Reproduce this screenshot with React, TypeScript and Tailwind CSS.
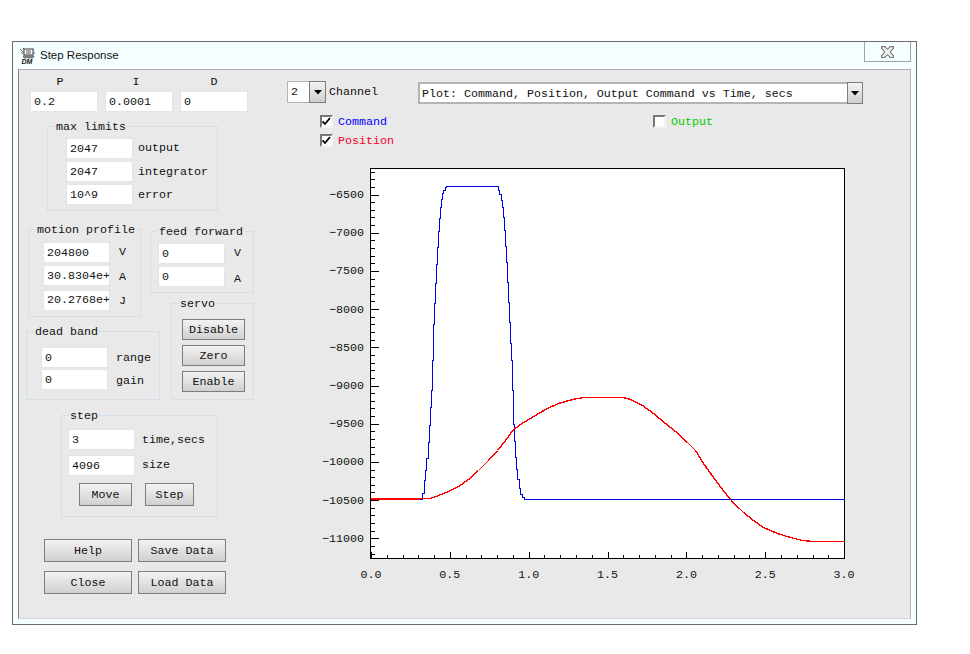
import type { ReactNode } from "react";

const BLUE_PTS: [number, number][] = [
  [371, 499], [420, 499], [422, 493], [424, 480], [425, 470], [426, 458], [428, 442], [429, 425], [430, 407],
  [431, 390], [432, 360], [433, 324], [434, 303], [435, 283], [436, 264], [437, 247], [438, 231], [439, 218],
  [440, 207], [441, 199], [442, 193], [443, 190], [445, 187], [446, 186], [496, 186], [498, 190], [499, 194],
  [501, 200], [502, 207], [503, 217], [504, 230], [505, 246], [506, 262], [507, 282], [508, 302], [509, 322],
  [510, 343], [511, 360], [512, 390], [513, 424], [514, 441], [515, 457], [516, 469], [517, 479], [519, 488],
  [520, 494], [522, 497], [524, 499], [844, 499],
];

const RED_PTS: [number, number][] = [
  [371, 498], [430, 498], [438, 495], [448, 491], [458, 486], [468, 479], [478, 470], [488, 460], [497, 450],
  [505, 440], [513, 429], [523, 422], [535, 415], [545, 409], [558, 403], [572, 399], [583, 397], [623, 397],
  [630, 399], [642, 405], [653, 413], [665, 423], [675, 431], [687, 442], [695, 450], [703, 463], [713, 477],
  [722, 489], [730, 499], [743, 512], [753, 520], [763, 527], [777, 533], [790, 537], [802, 540], [813, 541],
  [844, 541],
];

const Y_LABELS = [-6500, -7000, -7500, -8000, -8500, -9000, -9500, -10000, -10500, -11000];
const yPos = (v: number) => 194.5 + ((-6500 - v) / 500) * 38.2;
const xPos = (t: number) => 371 + t * 157.7;

function stepPath(pts: [number, number][]) {
  return pts.map(([x, y], i) => (i == 0 ? `M${x + 0.5} ${y + 0.5}` : `H${x + 0.5}V${y + 0.5}`)).join("");
}

function Field({ value, wide }: { value: string; wide?: boolean }) {
  return (
    <input
      readOnly
      value={value}
      className={`${wide ? "w-[68px]" : "w-[67px]"} h-[21px] shrink-0 bg-white border border-[#e1e5ea] pl-[3px] text-[11.67px] outline-none text-[#111]`}
    />
  );
}

function Group({ title, className, children }: { title: string; className: string; children: ReactNode }) {
  return (
    <div className={`relative border border-[#d5dfe9] ${className}`}>
      <span className="absolute -top-[6px] left-[7px] bg-[#e9e9e9] px-px leading-[13px] text-[11.67px] text-[#111]">{title}</span>
      {children}
    </div>
  );
}

function Btn({ label, className }: { label: string; className: string }) {
  return (
    <button className={`bg-linear-to-b from-[#f3f3f3] to-[#d0d0d0] border border-[#7d7d7d] pt-[2px] text-[11.67px] text-[#111] text-center ${className}`}>
      {label}
    </button>
  );
}

function Arrow({ className }: { className: string }) {
  return (
    <div className={`flex items-center justify-center bg-linear-to-b from-[#f3f3f3] to-[#cfcfcf] border border-[#7d7d7d] ${className}`}>
      <svg width="8" height="5" viewBox="0 0 8 5">
        <path d="M0 0H8L4 4.5Z" fill="#000" />
      </svg>
    </div>
  );
}

function Check({ label, color, checked }: { label: string; color: string; checked?: boolean }) {
  return (
    <div className="flex items-center h-[13px]">
      <div className="w-[13px] h-[13px] bg-white border-2 border-t-[#777] border-l-[#777] border-r-[#f4f4f4] border-b-[#f4f4f4]">
        {checked && (
          <svg width="9" height="9" viewBox="0 0 9 9">
            <path d="M0.5 4.5L3 7L8 1" fill="none" stroke="#000" strokeWidth="1.8" />
          </svg>
        )}
      </div>
      <span className={`ml-[5px] pt-[2px] text-[11.67px] ${color}`}>{label}</span>
    </div>
  );
}

function LogoIcon() {
  return (
    <svg width="18" height="18" viewBox="0 0 18 18">
      <path d="M1 2L4 5M2 6H5M4 1L6 4M15 2L13 4M16 6H14" stroke="#444" strokeWidth="0.8" fill="none" />
      <rect x="5" y="2" width="9" height="6" fill="#fff" stroke="#333" strokeWidth="1" />
      <path d="M7 4H12M7 6H12" stroke="#555" strokeWidth="1" />
      <path d="M4 9H15L14 11H5Z" fill="#999" stroke="#444" strokeWidth="0.6" />
      <text x="2.5" y="17" fontSize="7" fontWeight="bold" fontStyle="italic" fontFamily="'Liberation Sans', sans-serif" fill="#111">
        DM
      </text>
    </svg>
  );
}

function Plot() {
  const yMinor: number[] = [];
  for (let v = -6200; v >= -11200; v -= 100) yMinor.push(v);
  const xTicks: number[] = [];
  for (let i = 0; i <= 30; i++) xTicks.push(i / 10);

  return (
    <svg width="546" height="430" viewBox="315 160 546 430" className="block ml-[28px] mt-[13px]">
      <rect x="370.5" y="168.5" width="474" height="390" fill="#fff" stroke="#000" shapeRendering="crispEdges" />
      <g stroke="#000" shapeRendering="crispEdges">
        {yMinor.map((v) => {
          const major = v % 500 == 0;
          const y = Math.round(yPos(v)) + 0.5;
          return <line key={v} x1="371" x2={major ? 379 : 375} y1={y} y2={y} />;
        })}
        {xTicks.map((t, i) => {
          const x = Math.round(xPos(t)) + 0.5;
          return <line key={i} x1={x} x2={x} y1="558" y2={i % 5 == 0 ? 552 : 555} />;
        })}
        <line x1="371.5" x2="371.5" y1="553" y2="558" />
      </g>
      <path d={stepPath(BLUE_PTS)} fill="none" stroke="#0000e6" shapeRendering="crispEdges" />
      <polyline
        points={RED_PTS.map(([x, y]) => `${x + 0.5},${y + 0.5}`).join(" ")}
        fill="none"
        stroke="#ff0000"
        strokeWidth="1.4"
        shapeRendering="crispEdges"
      />
      <line x1="371" x2="420" y1="498.5" y2="498.5" stroke="#ff0000" strokeWidth="2" shapeRendering="crispEdges" />
      <g fontSize="11.67" fill="#111" fontFamily="'Liberation Mono', monospace">
        {Y_LABELS.map((v) => (
          <text key={v} x="364" y={yPos(v) + 3.5} textAnchor="end">
            {`\u2212${Math.abs(v)}`}
          </text>
        ))}
        {[0, 0.5, 1, 1.5, 2, 2.5, 3].map((t) => (
          <text key={t} x={xPos(t)} y="578" textAnchor="middle">
            {t.toFixed(1)}
          </text>
        ))}
      </g>
    </svg>
  );
}

function App() {
  return (
    <div className="w-[970px] h-[654px] bg-white pt-[41px] pl-[12px] overflow-hidden font-['Liberation_Mono',monospace]">
      <div className="w-[905px] h-[584px] border border-[#6b6b6b] bg-[#f5ffff]">
        <div className="h-[27px] flex justify-between pl-[6px] pr-[5px]">
          <div className="flex items-center gap-[3px]">
            <LogoIcon />
            <span className="text-[11.5px] text-[#111] font-['Liberation_Sans',sans-serif]">Step Response</span>
          </div>
          <div className="w-[47px] h-[20px] border border-t-0 border-[#a3a3a3] flex items-center justify-center">
            <svg width="13" height="12" viewBox="0 0 12 11">
              <path
                d="M0.5 0.5H3.5L6 3L8.5 0.5H11.5V2L8.5 5.5L11.5 9V10.5H8.5L6 8L3.5 10.5H0.5V9L3.5 5.5L0.5 2Z"
                fill="#eef2f2"
                stroke="#777"
              />
            </svg>
          </div>
        </div>

        <div className="mx-[5px] h-[550px] bg-[#e9e9e9] border-t border-t-[#adadad] border-l border-l-[#858585] border-r border-r-[#b5b5b5] border-b border-b-[#d2d6d6] flex">
          {/* left side, all the loop settings */}
          <div className="w-[268px] shrink-0 text-[11.67px] text-[#111]">
            <div className="mt-[5px] ml-[11px] grid grid-cols-[68px_68px_68px] gap-x-[7px]">
              <div className="h-[16px] leading-[15px] text-center pr-[8px]">P</div>
              <div className="h-[16px] leading-[15px] text-center pr-[6px]">I</div>
              <div className="h-[16px] leading-[15px] text-center">D</div>
              <Field wide value="0.2" />
              <Field wide value="0.0001" />
              <Field wide value="0" />
            </div>

            <Group title="max limits" className="mt-[14px] ml-[28px] w-[171px] h-[85px] pt-[11px] pl-[18px]">
              <div className="flex flex-col gap-[2px]">
                <div className="flex items-center">
                  <Field value="2047" />
                  <span className="ml-[5px] pt-px">output</span>
                </div>
                <div className="flex items-center">
                  <Field value="2047" />
                  <span className="ml-[5px] pt-[3px]">integrator</span>
                </div>
                <div className="flex items-center">
                  <Field value="10^9" />
                  <span className="ml-[5px] pt-[3px]">error</span>
                </div>
              </div>
            </Group>

            <div className="mt-[18px] ml-[7px] flex">
              <div className="w-[124px] shrink-0">
                <Group title="motion profile" className="ml-[2px] w-[113px] h-[88px] pt-[12px] pl-[14px]">
                  <div className="flex items-center">
                    <Field value="204800" />
                    <span className="ml-[9px]">V</span>
                  </div>
                  <div className="flex items-center mt-[2px]">
                    <Field value="30.8304e+006" />
                    <span className="ml-[9px] pt-[4px]">A</span>
                  </div>
                  <div className="flex items-center mt-[3px]">
                    <Field value="20.2768e+006" />
                    <span className="ml-[9px] pt-[3px]">J</span>
                  </div>
                </Group>
                <Group title="dead band" className="mt-[14px] w-[134px] h-[69px] pt-[15px] pl-[14px]">
                  <div className="flex items-center">
                    <Field value="0" />
                    <span className="ml-[8px] pt-[3px]">range</span>
                  </div>
                  <div className="flex items-center mt-[1px]">
                    <Field value="0" />
                    <span className="ml-[8px] pt-[4px]">gain</span>
                  </div>
                </Group>
              </div>

              <div className="mt-[2px]">
                <Group title="feed forward" className="w-[104px] h-[62px] pt-[11px] pl-[7px]">
                  <div className="flex items-center">
                    <Field value="0" />
                    <span className="ml-[9px]">V</span>
                  </div>
                  <div className="flex items-center mt-px">
                    <Field value="0" />
                    <span className="ml-[9px] pt-[6px]">A</span>
                  </div>
                </Group>
                <Group title="servo" className="mt-[10px] ml-[21px] w-[83px] h-[97px] pt-[15px] pl-[10px]">
                  <div className="flex flex-col gap-[5px]">
                    <Btn label="Disable" className="w-[63px] h-[21px]" />
                    <Btn label="Zero" className="w-[63px] h-[21px]" />
                    <Btn label="Enable" className="w-[63px] h-[21px]" />
                  </div>
                </Group>
              </div>
            </div>

            <Group title="step" className="mt-[15px] ml-[42px] w-[157px] h-[102px] pt-[13px] pl-[6px]">
              <div className="flex items-center">
                <Field value="3" />
                <span className="ml-[7px] pt-[3px]">time,secs</span>
              </div>
              <div className="flex items-center mt-[5px]">
                <Field value="4096" />
                <span className="ml-[7px] pt-px">size</span>
              </div>
              <div className="flex mt-[7px] ml-[11px] gap-[13px]">
                <Btn label="Move" className="w-[53px] h-[23px]" />
                <Btn label="Step" className="w-[49px] h-[23px]" />
              </div>
            </Group>

            <div className="mt-[22px] ml-[25px] grid grid-cols-[88px_88px] gap-x-[6px] gap-y-[9px]">
              <Btn label="Help" className="h-[23px]" />
              <Btn label="Save Data" className="h-[23px]" />
              <Btn label="Close" className="h-[23px]" />
              <Btn label="Load Data" className="h-[23px]" />
            </div>
          </div>

          {/* right side, channel, plot selection and the chart */}
          <div className="w-[576px] shrink-0">
            <div className="mt-[11px] flex justify-between text-[11.67px] text-[#111]">
              <div className="flex items-start">
                <div className="w-[39px] h-[22px] bg-white border border-[#b4b4b4] flex justify-between">
                  <span className="pl-[3px] leading-[20px]">2</span>
                  <Arrow className="w-[17px] -my-px -mr-px" />
                </div>
                <span className="ml-[3px] leading-[22px]">Channel</span>
              </div>
              <div className="mt-px w-[445px] h-[22px] bg-white border-2 border-[#b4b4b4] border-r-0 flex justify-between">
                <span className="pl-[2px] leading-[20px]">Plot: Command, Position, Output Command vs Time, secs</span>
                <Arrow className="w-[16px] -my-[2px]" />
              </div>
            </div>

            <div className="mt-[11px] ml-[33px] flex">
              <div className="w-[333px] flex flex-col gap-[6px]">
                <Check label="Command" color="text-[#0000ff]" checked />
                <Check label="Position" color="text-[#f0002a]" checked />
              </div>
              <Check label="Output" color="text-[#00cc00]" />
            </div>

            <Plot />
          </div>
        </div>
      </div>
    </div>
  );
}

export default App;
